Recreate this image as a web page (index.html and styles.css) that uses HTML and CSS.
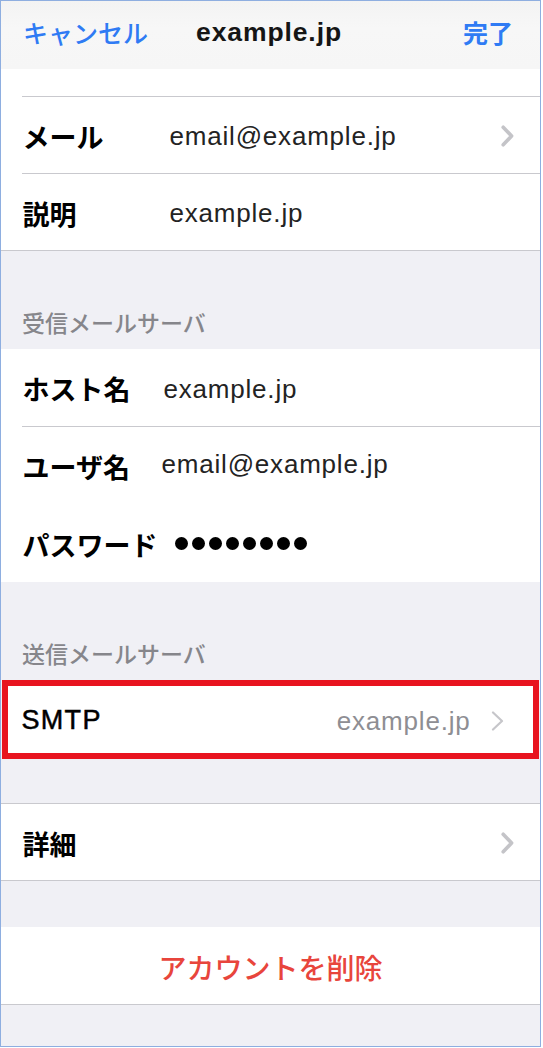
FILE: index.html
```html
<!DOCTYPE html>
<html lang="ja">
<head>
<meta charset="utf-8">
<title>example.jp</title>
<link rel="stylesheet" href="styles.css">
</head>
<body>
<div class="frame">
  <header class="nav">
    <span class="nav-btn nav-left">キャンセル</span>
    <span class="nav-title">example.jp</span>
    <span class="nav-btn nav-right">完了</span>
  </header>

  <section class="group group-first">
    <div class="row">
      <span class="label">メール</span>
      <span class="value">email@example.jp</span>
      <svg class="chev" viewBox="0 0 13 22" width="13" height="22"><path d="M2.2 2.2 L10.6 11 L2.2 19.8"/></svg>
    </div>
    <div class="row">
      <span class="label">説明</span>
      <span class="value">example.jp</span>
    </div>
  </section>

  <div class="section-header">受信メールサーバ</div>

  <section class="group group-plain">
    <div class="row row-noline">
      <span class="label label-narrow">ホスト名</span>
      <span class="value">example.jp</span>
    </div>
    <div class="row row-tall">
      <span class="label label-narrow">ユーザ名</span>
      <span class="value value-up">email@example.jp</span>
    </div>
    <div class="row row-tall row-noline">
      <span class="label label-narrow">パスワード</span>
      <span class="dots" aria-label="●●●●●●●●"><i></i><i></i><i></i><i></i><i></i><i></i><i></i><i></i></span>
    </div>
  </section>

  <div class="section-header">送信メールサーバ</div>

  <div class="smtp">
    <span class="smtp-label">SMTP</span>
    <span class="smtp-value">example.jp</span>
    <svg class="chev-thin" viewBox="0 0 13 20" width="13" height="20"><path d="M2 1.5 L11 10 L2 18.5"/></svg>
  </div>

  <div class="gap gap-44"></div>

  <section class="group group-boxed">
    <div class="row row-full">
      <span class="label">詳細</span>
      <span class="value"></span>
      <svg class="chev" viewBox="0 0 13 22" width="13" height="22"><path d="M2.2 2.2 L10.6 11 L2.2 19.8"/></svg>
    </div>
  </section>

  <div class="gap gap-46"></div>

  <section class="group group-delete">
    <div class="delete">アカウントを削除</div>
  </section>
</div>
</body>
</html>
```

FILE: styles.css
```css
html, body {
  margin: 0;
  padding: 0;
  background: #ffffff;
}

.frame {
  box-sizing: border-box;
  width: 541px;
  height: 1047px;
  border: 1.5px solid #8eaee0;
  background: #f0f0f5;
  overflow: hidden;
  display: flex;
  flex-direction: column;
}

/* nav bar */
.nav {
  box-sizing: border-box;
  height: 68px;
  flex: none;
  display: grid;
  grid-template-columns: 1fr auto 1fr;
  align-items: center;
  padding: 0 27px 6px 22px;
  background: linear-gradient(#f3f3f3, #f7f7f7 40%, #f6f6f6);
}

.nav-btn {
  font-family: "Noto Sans CJK JP", sans-serif;
  font-size: 25px;
  line-height: 1;
  color: #2f7bf4;
}

.nav-left {
  justify-self: start;
  font-weight: 500;
}

.nav-right {
  justify-self: end;
  font-weight: 700;
}

.nav-title {
  font-family: "Liberation Sans", Arial, sans-serif;
  font-weight: 700;
  font-size: 26.5px;
  letter-spacing: 0.9px;
  line-height: 1;
  color: #151515;
  margin-left: 2px;
}

/* groups */
.group {
  background: #ffffff;
  flex: none;
}

.group-first {
  padding-top: 27px;
  border-bottom: 1px solid #c9c9ce;
}

.group-boxed {
  border-top: 1px solid #c9c9ce;
  border-bottom: 1px solid #c9c9ce;
}

.group-delete {
  border-bottom: 1px solid #c9c9ce;
}

.row {
  box-sizing: border-box;
  height: 77px;
  margin-left: 20.5px;
  padding: 2px 26px 0 1px;
  border-top: 1px solid #c9c9ce;
  display: flex;
  align-items: center;
}

.row-tall {
  height: 78px;
}

.row-noline {
  border-top: 0;
}

.row-full {
  height: 76px;
  border-top: 0;
}

.label {
  flex: none;
  width: 147px;
  font-family: "Noto Sans CJK JP", sans-serif;
  font-weight: 700;
  font-size: 27px;
  line-height: 1;
  color: #000000;
}

.label-narrow {
  width: 141px;
}

.value {
  flex: 1;
  font-family: "Liberation Sans", Arial, sans-serif;
  font-size: 26px;
  letter-spacing: 0.8px;
  line-height: 1;
  color: #232323;
}

.value-up {
  margin-left: -2px;
  position: relative;
  top: -3px;
}

.chev {
  flex: none;
  fill: none;
  stroke: #c4c4c8;
  stroke-width: 3.6;
  stroke-linecap: round;
  stroke-linejoin: round;
}

.dots {
  display: flex;
  gap: 4px;
  margin-left: 11px;
  position: relative;
  top: -1px;
}

.dots i {
  display: block;
  width: 13px;
  height: 13px;
  border-radius: 50%;
  background: #000000;
}

/* section headers */
.section-header {
  box-sizing: border-box;
  height: 98px;
  flex: none;
  display: flex;
  align-items: flex-end;
  padding: 0 0 14px 21px;
  font-family: "Noto Sans CJK JP", sans-serif;
  font-weight: 500;
  font-size: 23px;
  line-height: 26px;
  color: #86868b;
}

/* SMTP row (highlighted) */
.smtp {
  box-sizing: border-box;
  flex: none;
  height: 79px;
  margin: 0 0 0 0.5px;
  width: 537px;
  border: 6px solid #e8141f;
  background: #ffffff;
  display: flex;
  align-items: center;
  padding: 2px 29px 0 14px;
}

.smtp-label {
  flex: 1;
  font-family: "Liberation Sans", Arial, sans-serif;
  font-size: 27px;
  letter-spacing: 1.3px;
  line-height: 1;
  color: #000000;
  -webkit-text-stroke: 0.5px #000000;
}

.smtp-value {
  font-family: "Liberation Sans", Arial, sans-serif;
  font-size: 26px;
  letter-spacing: 0.8px;
  line-height: 1;
  color: #8e8e93;
  margin-right: 20px;
}

.chev-thin {
  flex: none;
  fill: none;
  stroke: #c6c6ca;
  stroke-width: 2.2;
  stroke-linecap: round;
  stroke-linejoin: round;
}

.gap {
  flex: none;
}

.gap-44 {
  height: 44px;
}

.gap-46 {
  height: 46px;
}

.delete {
  height: 77px;
  display: flex;
  align-items: center;
  justify-content: center;
  padding-top: 3px;
  box-sizing: border-box;
  font-family: "Noto Sans CJK JP", sans-serif;
  font-weight: 500;
  font-size: 28px;
  line-height: 1;
  color: #e8453c;
}
```
